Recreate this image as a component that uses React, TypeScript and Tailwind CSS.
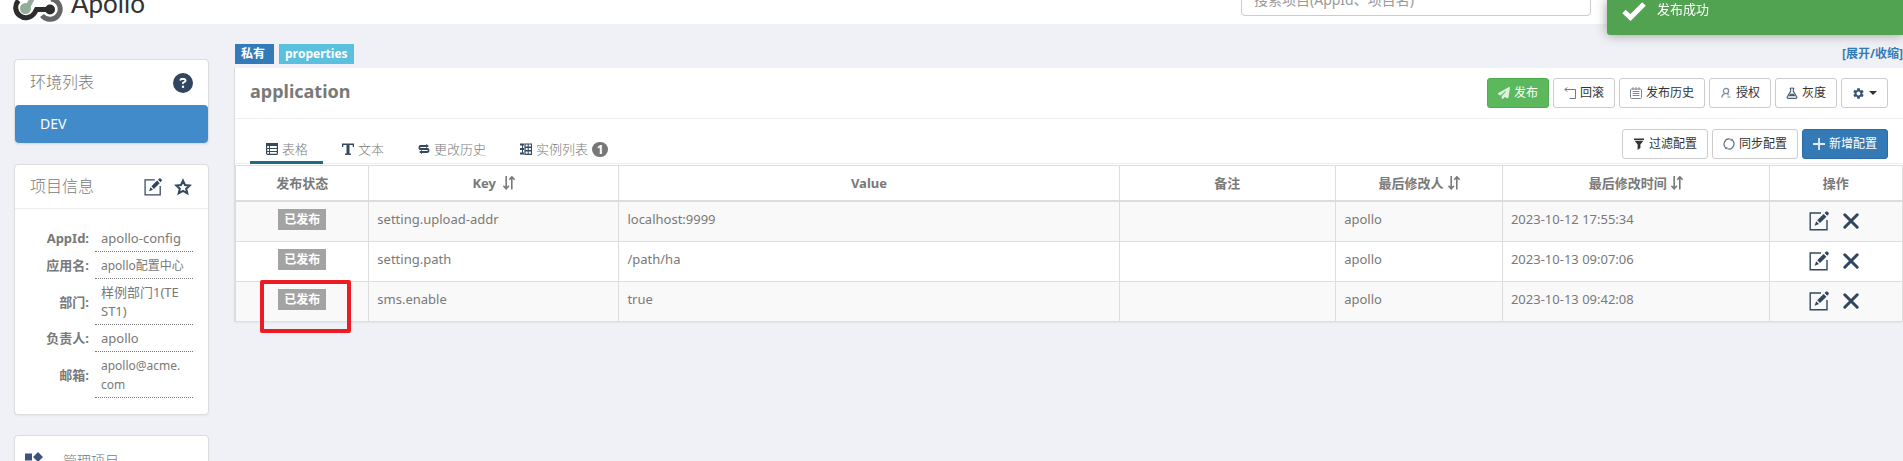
import type { ReactNode } from "react";
import { FaCircleQuestion, FaPaperPlane } from "react-icons/fa6";
import { MdSettings } from "react-icons/md";

const rows = [
  { key: "setting.upload-addr", value: "localhost:9999", user: "apollo", time: "2023-10-12 17:55:34" },
  { key: "setting.path", value: "/path/ha", user: "apollo", time: "2023-10-13 09:07:06" },
  { key: "sms.enable", value: "true", user: "apollo", time: "2023-10-13 09:42:08", marked: true },
];

const appInfo = [
  { label: "AppId:", value: "apollo-config", size: "text-[13px]" },
  { label: "应用名:", value: "apollo配置中心", size: "text-[12px]" },
  { label: "部门:", value: "样例部门1(TE\nST1)", size: "text-[13px]" },
  { label: "负责人:", value: "apollo", size: "text-[13px]" },
  { label: "邮箱:", value: "apollo@acme.\ncom", size: "text-[12px]" },
];

const columns = [
  { title: "发布状态", width: "w-[8%]" },
  { title: "Key\u00a0", width: "w-[15%]", sortable: true },
  { title: "Value", width: "w-[30%]" },
  { title: "备注", width: "w-[13%]" },
  { title: "最后修改人", width: "w-[10%]", sortable: true },
  { title: "最后修改时间", width: "w-[16%]", sortable: true },
  { title: "操作", width: "w-[8%]" },
];

function Logo() {
  return (
    <svg width="50" height="44" viewBox="0 0 50 44" fill="none">
      <path d="M13 32 L25 10" stroke="#94ad9b" strokeWidth="5" />
      <circle cx="25" cy="10" r="6" fill="#94ad9b" />
      <circle cx="12.5" cy="30.5" r="5.5" fill="#94ad9b" />
      <path d="M5.5 22.5 A10.2 10.2 0 1 0 21.5 35 L23.5 31.5 H36" stroke="#2d2d2d" strokeWidth="5" />
      <circle cx="37" cy="31.5" r="5" fill="#2d2d2d" />
      <path d="M38 21 A10.2 10.2 0 1 1 29 37.5" stroke="#666" strokeWidth="5" />
    </svg>
  );
}

function CheckIcon() {
  return (
    <svg width="24" height="19" viewBox="0 0 24 19" fill="none" stroke="#fff" strokeWidth="5">
      <path d="M2 9.5 L8.5 15.5 L22 2" />
    </svg>
  );
}

function EditIcon({ size }: { size: number }) {
  return (
    <svg width={size} height={size} viewBox="0 0 20 20" fill="none">
      <path d="M12 2 H1.2 V18.8 H18 V9" stroke="#34495e" strokeWidth="1.4" />
      <path d="M8.2 9.3 L14.6 2.9 L17.4 5.7 L11 12.1 Z" fill="#2f4560" />
      <path d="M7.2 10.3 L10 13.1 L5.6 14.8 Z" fill="#2f4560" />
      <path d="M15.6 1.9 L17 0.6 Q18 0 19 1 Q20.2 2 19.6 3.2 L18.4 4.7 Z" fill="#2f4560" />
    </svg>
  );
}

function CloseIcon() {
  return (
    <svg width="16" height="16" viewBox="0 0 16 16" fill="none" stroke="#2f4560" strokeWidth="3" strokeLinecap="round">
      <path d="M1.8 1.8 L14.2 14.2 M14.2 1.8 L1.8 14.2" />
    </svg>
  );
}

function StarIcon() {
  return (
    <svg width="18" height="18" viewBox="0 0 19 18" fill="none" stroke="#34495e" strokeWidth="2.2">
      <path d="M9.5 2.3 L11.6 6.9 L16.6 7.4 L12.9 10.7 L14 15.6 L9.5 13.1 L5 15.6 L6.1 10.7 L2.4 7.4 L7.4 6.9 Z" />
    </svg>
  );
}

function SortIcon() {
  return (
    <svg width="12" height="14" viewBox="0 0 12 14" fill="none" stroke="#797979" strokeWidth="1.6">
      <path d="M3.2 0 V12.4 M0.4 9.8 L3.2 12.8 L6 9.8" />
      <path d="M8.8 13.5 V1 M6.4 3.8 L8.8 0.8 L11.6 3.8" />
    </svg>
  );
}

function TableIcon() {
  return (
    <svg width="12" height="12" viewBox="0 0 12 12" fill="none" stroke="#34495e">
      <rect x="0.6" y="0.6" width="10.8" height="10.8" rx="1" strokeWidth="1.2" />
      <path d="M0 1.5 H12" strokeWidth="3" />
      <path d="M0 5.5 H12 M0 8.5 H12 M3.5 2 V12" />
    </svg>
  );
}

function TextIcon() {
  return (
    <svg width="12" height="12" viewBox="0 0 12 12" fill="none" stroke="#34495e">
      <path d="M0.6 4 V1.2 H11.4 V4" strokeWidth="1.4" />
      <path d="M6 1 V11" strokeWidth="3" />
      <path d="M3 11.2 H9" strokeWidth="1.4" />
    </svg>
  );
}

function HistoryIcon() {
  return (
    <svg width="12" height="12" viewBox="0 0 12 12" fill="none" stroke="#34495e" strokeWidth="1.8">
      <path d="M9 3 H2.6 Q1.4 3 1.4 4.5 Q1.4 6 2.6 6 H9.4 Q10.6 6 10.6 7.5 Q10.6 9 9.4 9 H3" />
      <path d="M8 1 L11 3 L8 5 Z M4 7 L1 9 L4 11 Z" fill="#34495e" stroke="none" />
    </svg>
  );
}

function InstanceIcon() {
  return (
    <svg width="12" height="12" viewBox="0 0 12 12" fill="none" stroke="#34495e">
      <path d="M5 1 H11.5 V4 H5 Z M5 4.5 H11.5 V7.5 H5 Z M5 8 H11.5 V11.3 H5 Z" strokeWidth="1.2" />
      <path d="M0 1.5 H4 M0 6 H4 M0 10.5 H4" strokeWidth="2" />
      <path d="M2.5 1 V11 M8.2 1 V11" />
    </svg>
  );
}

function RollbackIcon() {
  return (
    <svg width="12" height="12" viewBox="0 0 12 12" fill="none" stroke="#6b7b8c">
      <path d="M3.4 0.4 L0.8 2.5 L3.4 4.6 M0.8 2.5 H11.5 V11.5 H5.5" />
    </svg>
  );
}

function CalendarIcon() {
  return (
    <svg width="12" height="12" viewBox="0 0 12 12" fill="none" stroke="#7d8a98">
      <rect x="0.5" y="2" width="11" height="9.5" rx="1" />
      <path d="M3 0.2 V3 M6 0.2 V3 M9 0.2 V3 M2.6 4.5 H9.4 M2.6 6.5 H9.4 M2.6 8.5 H9.4" />
    </svg>
  );
}

function UserIcon() {
  return (
    <svg width="12" height="12" viewBox="0 0 12 12" fill="none" stroke="#7d8a98" strokeWidth="1.2">
      <circle cx="6" cy="4" r="2.6" />
      <path d="M4.6 6.6 Q1.8 8 1.8 10.6 M7.2 6.6 Q8.2 7.2 8.4 8.4 M7.4 10 H10.4" />
    </svg>
  );
}

function FlaskIcon() {
  return (
    <svg width="12" height="12" viewBox="0 0 12 12" fill="none" stroke="#4d5f73">
      <path d="M3.8 1.6 Q6 0.4 8.2 1.6 M4.6 1.4 V4.4 L1.2 10 Q1 11.3 2.2 11.3 H9.8 Q11 11.3 10.8 10 L7.4 4.4 V1.4" strokeWidth="1.2" />
      <path d="M4 6.8 H8 L9.4 9.2 H2.6 Z" fill="#4d5f73" stroke="none" />
    </svg>
  );
}

function FilterIcon() {
  return (
    <svg width="12" height="12" viewBox="0 0 12 12" fill="#333">
      <path d="M1 0.5 H11 V2 H1 Z M1.6 2.8 H10.4 L7.4 6.6 V10 L4.6 12 V6.6 Z" />
    </svg>
  );
}

function SyncIcon() {
  return (
    <svg width="12" height="12" viewBox="0 0 12 12" fill="none" stroke="#5f7183" strokeWidth="1.2">
      <path d="M3.6 10.4 A5 5 0 0 1 7.6 1.3 M8.4 1.6 A5 5 0 0 1 4.4 10.7" />
      <path d="M2 10.6 H4 V8.8 M10 1.4 H8 V3.2" strokeWidth="0.8" />
    </svg>
  );
}

function PlusIcon() {
  return (
    <svg width="12" height="12" viewBox="0 0 12 12" fill="none" stroke="#e3edf6" strokeWidth="1.8">
      <path d="M6 0 V12 M0 6 H12" />
    </svg>
  );
}

function Button({ icon, children, tone = "default" }: { icon: ReactNode; children: ReactNode; tone?: "default" | "success" | "primary" }) {
  const tones = {
    default: "border-[#ccc] bg-white text-[#333]",
    success: "border-[#4cae4c] bg-[#5cb85c] text-white",
    primary: "border-[#2e6da4] bg-[#337ab7] text-white",
  };
  return (
    <button className={`flex h-[30px] items-center gap-1 rounded-[3px] border px-2.5 text-[12px] ${tones[tone]}`}>
      {icon}
      {children}
    </button>
  );
}

function Tab({ icon, children, active }: { icon: ReactNode; children: ReactNode; active?: boolean }) {
  return (
    <button
      role="tab"
      aria-selected={!!active}
      className={`-mb-px flex h-[30px] items-center gap-1 border-b-3 pt-[3px] pr-[15px] pl-4 text-[13px] font-light ${
        active ? "border-[#1b6d85]" : "border-transparent"
      }`}
    >
      {icon}
      {children}
    </button>
  );
}

export default function App() {
  return (
    <div className="h-screen overflow-hidden bg-[#f0f1f6] font-['Noto_Sans','Noto_Sans_CJK_SC',sans-serif] text-[13px] leading-[18px] text-[#797979]">
      {/* Top bar, scrolled partly out of view */}
      <header className="-mt-[26px] flex h-[50px] items-end justify-between bg-white pl-[13px]">
        <a href="#" className="mb-[2px] flex items-end gap-2 text-[#333]">
          <Logo />
          <span className="mb-1 font-['Lato',sans-serif] text-[26px] leading-[30px]">Apollo</span>
        </a>
        <input
          type="text"
          aria-label="搜索项目"
          placeholder="搜索项目(AppId、项目名)"
          className="mr-[312px] mb-2 h-[34px] w-[350px] rounded border border-[#ccc] px-3 text-[14px] placeholder:text-[#999]"
        />
      </header>

      {/* Toast */}
      <div role="status" className="fixed top-0 right-0 flex h-[35px] w-[296px] items-start gap-[11px] rounded-bl-[3px] bg-[#51a351] px-[15px] text-white shadow-[0_0_12px_#999]">
        <span className="pt-0.5">
          <CheckIcon />
        </span>
        <span>发布成功</span>
      </div>

      <div className="flex items-start gap-[25px] pt-5 pl-[14px]">
        <aside className="flex w-[195px] shrink-0 flex-col gap-5 pt-[15px]">
          <section className="rounded border border-[#ddd] bg-white shadow-xs">
            <div className="flex h-[45px] items-center justify-between px-[15px]">
              <h2 className="pb-0.5 text-[16px] font-light">环境列表</h2>
              <FaCircleQuestion size={20} color="#2f4560" />
            </div>
            <a href="#" className="flex h-[38px] items-center rounded bg-[#428bca] px-[25px] text-[14px] text-white">
              DEV
            </a>
          </section>

          <section className="rounded border border-[#ddd] bg-white shadow-xs">
            <div className="flex h-[44px] items-center justify-between border-b border-[#eee] pr-4 pl-[15px]">
              <h2 className="pb-0.5 text-[16px] font-light">项目信息</h2>
              <div className="flex items-center gap-3">
                <button aria-label="修改项目">
                  <EditIcon size={18} />
                </button>
                <button aria-label="收藏">
                  <StarIcon />
                </button>
              </div>
            </div>
            <table className="mt-4 mr-[15px] mb-4 ml-5">
              <tbody>
                {appInfo.map((item) => (
                  <tr key={item.label}>
                    <th className="w-[60px] pr-1.5 text-right align-middle font-bold whitespace-nowrap">{item.label}</th>
                    <td className={`w-[98px] border-b border-dotted border-[#797979] px-1.5 pt-1 pb-[3px] leading-[19px] break-all whitespace-pre-line ${item.size}`}>
                      {item.value}
                    </td>
                  </tr>
                ))}
              </tbody>
            </table>
          </section>

          <section className="rounded border border-[#ddd] bg-white shadow-xs">
            <a href="#" className="flex h-[50px] items-center gap-5 px-[9px] text-[14px] font-light">
              <svg width="19" height="19" viewBox="0 0 19 19" fill="#3b5479">
                <path d="M1 1.5 H8 V8.5 H1 Z M1 10.5 H8 V17.5 H1 Z M10.5 10.5 H17.5 V17.5 H10.5 Z M14 0 L19 5 L14 10 L9 5 Z" />
              </svg>
              管理项目
            </a>
          </section>
        </aside>

        <main className="min-w-0 flex-1">
          <div className="flex items-center gap-[5px] pb-1 pl-px font-['Open_Sans','Noto_Sans_CJK_SC',sans-serif] text-[12px] font-bold">
            <span className="h-5 bg-[#337ab7] pr-[9px] pl-1.5 leading-5 text-white">私有</span>
            <span className="h-5 bg-[#5bc0de] px-1.5 leading-5 text-white">properties</span>
            <a href="#" className="ml-auto text-[#337ab7]">
              [展开/收缩]
            </a>
          </div>

          <section className="border-l border-[#ddd] bg-white shadow-xs">
            <div className="flex h-[51px] items-center justify-between border-b border-[#eff0f4] px-[15px]">
              <h1 className="pb-1 text-[18px] font-bold">application</h1>
              <div className="flex gap-1">
                <Button tone="success" icon={<FaPaperPlane size={12} color="#dff0df" />}>
                  发布
                </Button>
                <Button icon={<RollbackIcon />}>回滚</Button>
                <Button icon={<CalendarIcon />}>发布历史</Button>
                <Button icon={<UserIcon />}>授权</Button>
                <Button icon={<FlaskIcon />}>灰度</Button>
                <Button icon={<MdSettings size={13} color="#34527a" />}>
                  <svg width="8" height="4" viewBox="0 0 8 4" fill="#333" aria-label="更多">
                    <path d="M0 0 H8 L4 4 Z" />
                  </svg>
                </Button>
              </div>
            </div>

            <div className="flex h-[45px] items-end justify-between border-b border-[#eee] px-[15px]">
              <div role="tablist" className="flex gap-[3px]">
                <Tab active icon={<TableIcon />}>
                  表格
                </Tab>
                <Tab icon={<TextIcon />}>文本</Tab>
                <Tab icon={<HistoryIcon />}>更改历史</Tab>
                <Tab icon={<InstanceIcon />}>
                  实例列表
                  <span className="h-[15px] w-4 rounded-full bg-[#777] text-center text-[12px] leading-[15px] font-bold text-white">1</span>
                </Tab>
              </div>
              <div className="flex gap-1 pb-1">
                <Button icon={<FilterIcon />}>过滤配置</Button>
                <Button icon={<SyncIcon />}>同步配置</Button>
                <Button tone="primary" icon={<PlusIcon />}>
                  新增配置
                </Button>
              </div>
            </div>

            <table className="mt-px w-full table-fixed border-collapse">
              <thead>
                <tr>
                  {columns.map((col) => (
                    <th key={col.title} className={`h-[35px] border border-b-2 border-[#ddd] font-bold ${col.width}`}>
                      <span className="flex items-center justify-center gap-1">
                        {col.title}
                        {col.sortable && <SortIcon />}
                      </span>
                    </th>
                  ))}
                </tr>
              </thead>
              <tbody>
                {rows.map((row) => (
                  <tr key={row.key} className="h-10 align-top first:h-[41px] odd:bg-[#f9f9f9]">
                    <td className="relative border border-[#ddd] pt-[7px] text-center">
                      <span className="inline-block h-[21px] bg-[#a3a3a3] px-1.5 text-[12px] leading-[21px] font-bold text-white">已发布</span>
                      {row.marked && (
                        <span className="absolute -top-[2px] left-6 h-[53px] w-[91px] rounded-[2px] border-4 border-[#ed1c24]" />
                      )}
                    </td>
                    <td className="border border-[#ddd] px-2 pt-2">{row.key}</td>
                    <td className="border border-[#ddd] px-2 pt-2">{row.value}</td>
                    <td className="border border-[#ddd] px-2 pt-2"></td>
                    <td className="border border-[#ddd] px-2 pt-2">{row.user}</td>
                    <td className="border border-[#ddd] px-2 pt-2">{row.time}</td>
                    <td className="border border-[#ddd] pt-[9px]">
                      <div className="flex items-center justify-center gap-3.5 pr-1">
                        <button aria-label="修改">
                          <EditIcon size={20} />
                        </button>
                        <button aria-label="删除">
                          <CloseIcon />
                        </button>
                      </div>
                    </td>
                  </tr>
                ))}
              </tbody>
            </table>
          </section>
        </main>
      </div>
    </div>
  );
}
